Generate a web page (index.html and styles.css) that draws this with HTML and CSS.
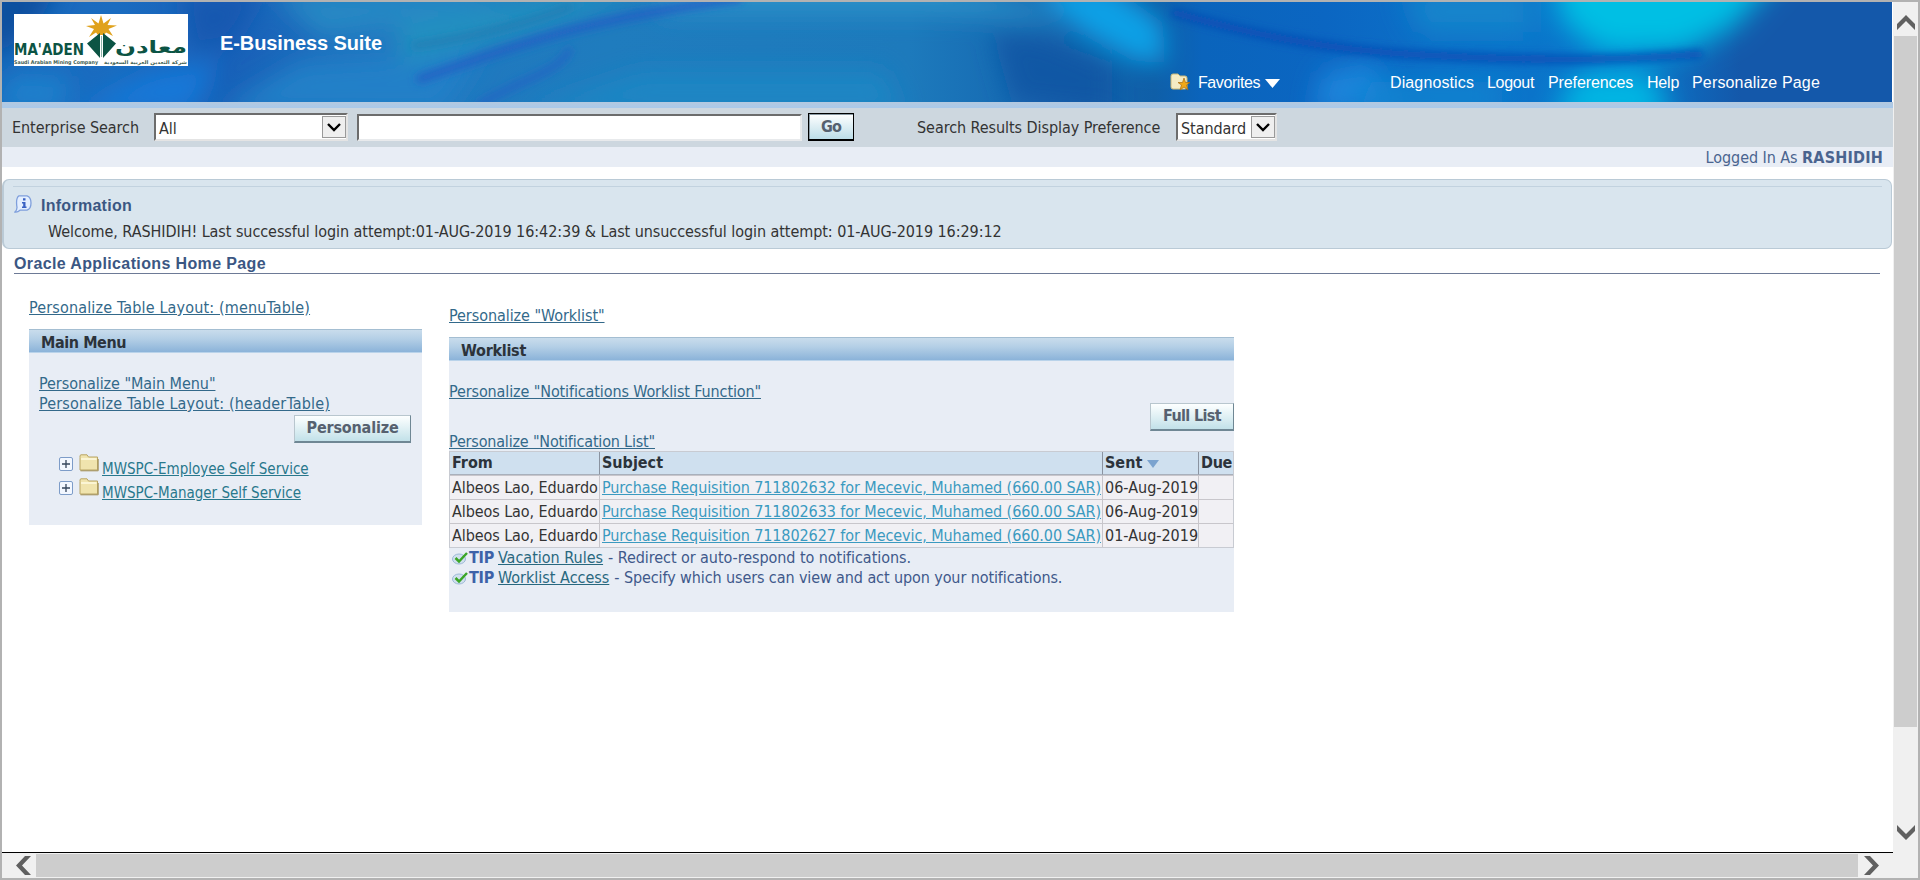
FILE: index.html
```html
<!DOCTYPE html>
<html lang="en">
<head>
<meta charset="utf-8">
<title>Oracle Applications Home Page</title>
<link rel="stylesheet" href="styles.css">
</head>
<body>
<div class="window">
<div class="viewport">
<main class="page">
  <header class="banner">
    <svg class="banner-art" viewBox="0 0 1890 100" preserveAspectRatio="none" aria-hidden="true">
      <defs>
        <linearGradient id="base" x1="0" x2="1" y1="0" y2="0">
          <stop offset="0" stop-color="#1a68bc"/><stop offset=".06" stop-color="#1a6cc0"/>
          <stop offset=".12" stop-color="#1860b8"/><stop offset=".2" stop-color="#2076c0"/>
          <stop offset=".32" stop-color="#1f7cbe"/><stop offset=".48" stop-color="#1d7abc"/>
          <stop offset=".55" stop-color="#1466b0"/><stop offset=".61" stop-color="#0f5fa8"/>
          <stop offset=".635" stop-color="#0a64bc"/>
          <stop offset=".7" stop-color="#0b66c2"/>
          <stop offset=".76" stop-color="#0c70c8"/><stop offset=".86" stop-color="#0878cc"/>
          <stop offset=".92" stop-color="#1458aa"/><stop offset="1" stop-color="#1458aa"/>
        </linearGradient>
        <filter id="b4" x="-30%" y="-60%" width="160%" height="220%"><feGaussianBlur stdDeviation="4"/></filter>
        <filter id="b12" x="-30%" y="-60%" width="160%" height="220%"><feGaussianBlur stdDeviation="12"/></filter>
        <filter id="b20" x="-40%" y="-80%" width="180%" height="260%"><feGaussianBlur stdDeviation="14"/></filter>
      </defs>
      <rect width="1890" height="100" fill="url(#base)"/>
      <g filter="url(#b12)">
        <path d="M-20-20H60L30 30L-20 60Z" fill="#0c4f9f"/>
        <path d="M-10 110L10 70L70 75L60 110Z" fill="#1c80cc"/>
        <path d="M70 110L150 70L215 60L190 110Z" fill="#1478d8"/>
        <path d="M180-10H260L230 40L190 50Z" fill="#1658b0"/>
        <path d="M215 110L300 60L480 50L440 110Z" fill="#2380c8"/>
        <path d="M270-10H520L440 18L320 35Z" fill="#2888c4"/>
        <path d="M395 25L560-10H650L500 38L400 62Z" fill="#2490c0"/>
        <path d="M520 110L640 70H880L900 110Z" fill="#1a86c4"/>
        <path d="M650-20H930L1100 20L930 12H660Z" fill="#2a90c8"/>
        <path d="M990 30L1040 34L1110 64V110L1010 100Z" fill="#1154a2" opacity=".8"/>
        <path d="M1030-20L1110-15L1160 20L1164 62L1130 58L1080 30Z" fill="#10a0e6"/>
        <path d="M1320 70L1370 60L1400 110H1310Z" fill="#1c84da"/>
      </g>
      <g filter="url(#b20)">
        <path d="M1550-40H1790L1730 26L1680 50H1600L1560 20Z" fill="#00bfe4"/>
        <path d="M1550 120L1575 72H1650L1670 120Z" fill="#00b8e4"/>
        <path d="M1350 110L1370 80H1500V110Z" fill="#0c84d0"/>
        <path d="M1400-10H1530V30H1420Z" fill="#1286cc"/>
      </g>
      <g filter="url(#b4)" fill="none">
        <path d="M415 78C520 42 570 20 740-4" stroke="#2460c4" stroke-width="8"/>
        <path d="M475 104C520 76 560 70 568 46" stroke="#2064c4" stroke-width="6"/>
        <path d="M410 44C480 34 540 16 570 4" stroke="#2078b0" stroke-width="5"/>
        <path d="M1170 10C1240 30 1320 48 1420 53S1600 60 1700 52" stroke="#084cb4" stroke-width="8"/>
      </g>
    </svg>
    <svg class="logo" viewBox="0 0 174 52" role="img" aria-label="Ma'aden">
      <rect width="174" height="52" fill="#fff"/>
      <path d="M87 1L89.500 9.500L97 4L93.500 11L103 11.500L94.500 15L99 22L92 18.500L90 21H84L82 18.500L75 23L80 15L72 12L81 11L77 4L84.500 9.500Z" fill="#e0a21c"/>
      <path d="M86 19L73 29.500L86 44Z M89 19V44L102 29.500Z" fill="#0c5444"/>
      <path d="M87.500 22V43" stroke="#8fb5a9"/>
      <text x="0" y="41" textLength="70" lengthAdjust="spacingAndGlyphs" class="logo-name">MA'ADEN</text>
      <text x="173" y="39" textLength="72" lengthAdjust="spacingAndGlyphs" class="logo-ar" direction="rtl">معادن</text>
      <text x="0" y="50" textLength="84" lengthAdjust="spacingAndGlyphs" class="logo-sub">Saudi Arabian Mining Company</text>
      <text x="173" y="49.500" textLength="83" lengthAdjust="spacingAndGlyphs" class="logo-sub" direction="rtl">شركة التعدين العربية السعودية</text>
    </svg>
    <h1 class="product">E-Business Suite</h1>
    <nav class="global">
      <a class="favorites">
        <svg width="20" height="18" viewBox="0 0 20 18"><path d="M1 3Q1 1 3 1H8L10 3H15Q17 3 17 5V14Q17 16 15 16H3Q1 16 1 14Z" fill="#f4ebc4" stroke="#c9b878"/><path d="M14 5L15.500 9.500H20L16.500 12L18 17L14 14L10 17L11.500 12L8 9.500H12.500Z" fill="#f0a818" stroke="#a86c10" stroke-width=".7"/></svg>
        <span>Favorites</span>
        <svg width="15" height="9" viewBox="0 0 15 9"><path d="M0 0H15L7.500 9Z" fill="#fff"/></svg>
      </a>
      <a class="g1">Diagnostics</a><a class="g2">Logout</a><a class="g3">Preferences</a><a class="g4">Help</a><a class="g5">Personalize Page</a>
    </nav>
  </header>
  <div class="band"></div>
  <form class="search">
    <label class="es">Enterprise Search</label>
    <span class="select wide">All<i><svg width="14" height="9" viewBox="0 0 14 9"><path d="M1 1L7 7L13 1" fill="none" stroke="#000" stroke-width="2.400"/></svg></i></span>
    <input class="field" type="text" aria-label="Search">
    <button class="go" type="button">Go</button>
    <label class="pref">Search Results Display Preference</label>
    <span class="select">Standard<i><svg width="14" height="9" viewBox="0 0 14 9"><path d="M1 1L7 7L13 1" fill="none" stroke="#000" stroke-width="2.400"/></svg></i></span>
  </form>
  <div class="login">Logged In As <b>RASHIDIH</b></div>

  <section class="info">
    <div class="info-title">
      <svg width="18" height="18" viewBox="0 0 18 18"><path d="M5 .8H13Q17 2 17 8T13 15.200H6Q3.500 17.500 1 17Q3 15 3 12.500Q1.500 3 5 .8Z" fill="#e4efff" stroke="#7f9fdc" stroke-width="1.300"/><path d="M9 3.200H11.500V5.500H9ZM8 7H11.500V11.500H12.500V13H8V11.500H9.200V8.500H8Z" fill="#3a62c4"/></svg>
      <h2>Information</h2>
    </div>
    <p>Welcome, RASHIDIH! Last successful login attempt:01-AUG-2019 16:42:39 &amp; Last unsuccessful login attempt: 01-AUG-2019 16:29:12</p>
  </section>
  <h2 class="home">Oracle Applications Home Page</h2>

  <div class="columns">
    <section class="menu">
      <a class="link loose">Personalize Table Layout: (menuTable)</a>
      <h3 class="menu-title">Main Menu</h3>
      <div class="menu-body">
        <a class="link">Personalize "Main Menu"</a>
        <a class="link loose">Personalize Table Layout: (headerTable)</a>
        <button class="btn" type="button">Personalize</button>
        <ul class="tree">
          <li><svg width="14" height="14" viewBox="0 0 14 14"><rect x=".5" y=".5" width="13" height="13" rx="1.500" fill="#f2f7ff" stroke="#7d9cc8"/><path d="M3 7H11M7 3V11" stroke="#34465c" stroke-width="1.300"/></svg><svg class="folder" width="20" height="18" viewBox="0 0 20 18"><path d="M1 3.500V1.500L2 .8H8L9.500 3H18.500V16H1Z" fill="#f0e4ae" stroke="#b9a564"/><path d="M2 5H17.500" stroke="#fffbe0" stroke-width="1.500"/><path d="M1.500 16.800H19.200V5" fill="none" stroke="#a08d55"/></svg><a>MWSPC-Employee Self Service</a></li>
          <li><svg width="14" height="14" viewBox="0 0 14 14"><rect x=".5" y=".5" width="13" height="13" rx="1.500" fill="#f2f7ff" stroke="#7d9cc8"/><path d="M3 7H11M7 3V11" stroke="#34465c" stroke-width="1.300"/></svg><svg class="folder" width="20" height="18" viewBox="0 0 20 18"><path d="M1 3.500V1.500L2 .8H8L9.500 3H18.500V16H1Z" fill="#f0e4ae" stroke="#b9a564"/><path d="M2 5H17.500" stroke="#fffbe0" stroke-width="1.500"/><path d="M1.500 16.800H19.200V5" fill="none" stroke="#a08d55"/></svg><a>MWSPC-Manager Self Service</a></li>
        </ul>
      </div>
    </section>

    <section class="worklist">
      <a class="link">Personalize "Worklist"</a>
      <h3>Worklist</h3>
      <div class="work-body">
        <a class="link fn">Personalize "Notifications Worklist Function"</a>
        <button class="btn" type="button">Full List</button>
        <a class="link tight">Personalize "Notification List"</a>
        <table>
          <colgroup><col class="c1"><col class="c2"><col class="c3"><col class="c4"></colgroup>
          <tr><th>From</th><th>Subject</th><th>Sent<svg class="sort" width="12" height="8" viewBox="0 0 12 8"><path d="M0 0H12L6 8Z" fill="#7ba3cf"/></svg></th><th class="due">Due</th></tr>
          <tr><td>Albeos Lao, Eduardo</td><td><a>Purchase Requisition 711802632 for Mecevic, Muhamed (660.00 SAR)</a></td><td>06-Aug-2019</td><td></td></tr>
          <tr><td>Albeos Lao, Eduardo</td><td><a>Purchase Requisition 711802633 for Mecevic, Muhamed (660.00 SAR)</a></td><td>06-Aug-2019</td><td></td></tr>
          <tr><td>Albeos Lao, Eduardo</td><td><a>Purchase Requisition 711802627 for Mecevic, Muhamed (660.00 SAR)</a></td><td>01-Aug-2019</td><td></td></tr>
        </table>
        <p class="tip"><svg width="17" height="13" viewBox="0 0 17 13"><ellipse cx="7" cy="7" rx="6.500" ry="5" fill="#cfe0ee" stroke="#9db9d6"/><path d="M3.500 6L7 9.500L15 1" fill="none" stroke="#3ba526" stroke-width="2.500"/></svg><b>TIP</b><a>Vacation Rules</a><span>- Redirect or auto-respond to notifications.</span></p>
        <p class="tip"><svg width="17" height="13" viewBox="0 0 17 13"><ellipse cx="7" cy="7" rx="6.500" ry="5" fill="#cfe0ee" stroke="#9db9d6"/><path d="M3.500 6L7 9.500L15 1" fill="none" stroke="#3ba526" stroke-width="2.500"/></svg><b>TIP</b><a>Worklist Access</a><span class="spec">- Specify which users can view and act upon your notifications.</span></p>
      </div>
    </section>
  </div>
</main>
<div class="vscroll">
  <svg width="20" height="16" viewBox="0 0 20 16"><path d="M1 13V9L10 0L19 9V15L10 6L1 15Z" fill="#606060"/></svg>
  <div class="vthumb"></div>
  <svg class="down" width="20" height="16" viewBox="0 0 20 16"><path d="M1 1L10 10L19 1V7L10 16L1 7Z" fill="#606060"/></svg>
</div>
</div>
<div class="hscroll">
  <svg width="16" height="20" viewBox="0 0 16 20"><path d="M9 0H15L6 9.500L15 19H9L0 9.500Z" fill="#606060"/></svg>
  <div class="hthumb"></div>
  <svg width="16" height="20" viewBox="0 0 16 20"><path d="M7 0H1L10 9.500L1 19H7L16 9.500Z" fill="#606060"/></svg>
</div>
</div>
</body>
</html>
```

FILE: styles.css
```css
* { box-sizing: border-box; }
body { margin: 0; font: 16px/20px "DejaVu Sans Condensed", "DejaVu Sans", sans-serif; font-stretch: condensed; letter-spacing: -0.06px; color: #333; background: #fff; }
h1, h2, h3, p, ul { margin: 0; padding: 0; }
svg { display: block; flex: none; }
.window { width: 1920px; height: 880px; border: 2px solid #b2b2b2; display: flex; flex-direction: column; overflow: hidden; }
.viewport { display: flex; height: 851px; }
.page { width: 1891px; border-bottom: 1px solid #000; }

.banner { height: 100px; display: flex; align-items: flex-start; position: relative; color: #fff; font-family: "Liberation Sans", sans-serif; }
.banner-art { position: absolute; inset: 0; width: 1890px; height: 100px; }
.logo { width: 174px; height: 52px; margin: 12px 0 0 12px; position: relative; letter-spacing: 0; }
.logo-name { font: bold 15.5px "DejaVu Sans Condensed", sans-serif; fill: #0c5444; }
.logo-ar { font: bold 17px "DejaVu Sans", sans-serif; fill: #0c5444; }
.logo-sub { font: bold 5px "DejaVu Sans", sans-serif; fill: #3c5c50; }
.product { font: bold 20px/24px "Liberation Sans", sans-serif; letter-spacing: -0.09px; margin: 29px 0 0 32px; width: 949px; position: relative; }
.global { display: flex; position: relative; margin-top: 71px; line-height: 20px; }
.favorites { display: flex; align-items: center; width: 220px; margin-left: 1px; letter-spacing: -0.42px; }
.favorites > svg:first-child { margin-top: -2px; }
.favorites span { margin: 0 5px 0 8px; }
.g1 { width: 97px; letter-spacing: .12px; } .g2 { width: 61px; letter-spacing: -0.32px; } .g3 { width: 99px; letter-spacing: -0.11px; } .g4 { width: 45px; letter-spacing: -0.2px; } .g5 { letter-spacing: .16px; }

.band { height: 6px; background: linear-gradient(#b4c9df, #a9c9ea); }
.search { height: 39px; background: #cdd7df; display: flex; align-items: flex-start; padding: 5px 0 0 10px; }
.search label { line-height: 30px; }
.es { width: 142px; }
.select { height: 28px; width: 101px; background: #fff; border: 2px solid; border-color: #6c6c6c #e4e4e4 #e4e4e4 #6c6c6c; display: flex; justify-content: space-between; line-height: 25px; padding: 1px 0 0 3px; }
.select.wide { width: 194px; }
.select i { width: 24px; height: 22px; border: 1px solid #9a9a9a; background: #efefef; display: flex; align-items: center; justify-content: center; }
.field { width: 445px; height: 27px; margin: 1px 6px 0 9px; border: 2px solid; border-color: #6c6c6c #e8eaec #e8eaec #6c6c6c; background: #fff; padding: 0; }
.go { width: 46px; height: 28px; margin: 0 63px 0 0; padding: 0; border: 1px solid #000; border-bottom-width: 2px; background: linear-gradient(#fff, #bcdde8); box-shadow: inset 1px 1px #8a9aa4; font: bold 16px/20px "DejaVu Sans Condensed", sans-serif; letter-spacing: -0.85px; color: #56616f; }
.pref { width: 259px; }
.login { height: 20px; background: #e8edf5; color: #4a648f; line-height: 22px; text-align: right; padding-right: 10px; }
.login b { letter-spacing: .2px; }

.info { margin: 12px 1px 0 0; height: 70px; border: 1px solid #bacad6; border-left: 2px solid #bacad6; border-radius: 7px; background: #d9e5ee; padding: 6px 9px 0 9px; }
.info-title { border-top: 1px solid #c2d2df; display: flex; padding: 8px 0 0 1px; gap: 9px; height: 35px; }
.info h2, .home { font: bold 16px/20px "Liberation Sans", sans-serif; letter-spacing: .27px; color: #3b5783; }
.info h2 { line-height: 22px; }
.info p { padding-left: 35px; line-height: 21px; }
.home { margin: 5px 13px 0 12px; height: 20px; border-bottom: 1px solid #6d7a96; letter-spacing: .37px; }

.columns { display: flex; padding-left: 27px; }
.link { display: block; color: #33698a; text-decoration: underline; height: 20px; line-height: 22px; }
.loose { letter-spacing: .155px; }
.fn { letter-spacing: -0.116px; }
.tight { letter-spacing: -0.183px; }
.menu { width: 393px; margin-right: 27px; padding-top: 23px; }
.worklist { width: 785px; padding-top: 31px; }
h3 { height: 24px; margin-top: 12px; padding-left: 12px; font: bold 16px/26px "DejaVu Sans Condensed", sans-serif; letter-spacing: -0.27px; color: #2c333b; background: linear-gradient(#c9dcec, #b4cfe6 40%, #8bb3d9); border-top: 1px solid #a4bed2; border-bottom: 1px solid #b9d3ea; }
.menu-title { letter-spacing: -0.42px; }
.menu-body { height: 172px; background: #e8edf5; padding: 20px 11px 0 10px; display: flex; flex-direction: column; }
.btn { align-self: flex-end; height: 28px; width: 117px; padding: 0 0 1px; border: 1px solid; border-color: #b8c6ce #6f8794 #6f8794 #b8c6ce; border-bottom-width: 2px; background: linear-gradient(#fdffff, #c2e1e9); font: bold 16px/20px "DejaVu Sans Condensed", sans-serif; letter-spacing: -0.17px; color: #56616f; }
.menu-body .btn { margin-top: 2px; }
.tree { list-style: none; padding: 10px 0 0 20px; }
.tree li { display: flex; height: 24px; font-size: 15px; letter-spacing: 0; }
.tree li > svg { margin-top: 4px; }
.tree li > .folder { margin: 1px 3px 0 6px; }
.tree a { color: #28788c; text-decoration: underline; padding-top: 6px; }
.work-body { height: 251px; background: #e8edf5; padding-top: 20px; display: flex; flex-direction: column; }
.work-body .btn { width: 84px; margin-top: 2px; letter-spacing: -0.63px; }
table { width: 785px; table-layout: fixed; border-collapse: separate; border-spacing: 0; border: 1px solid #c8cbd2; }
.c1 { width: 149px; } .c2 { width: 503px; } .c3 { width: 96px; }
th, td { height: 24px; padding: 0 0 0 2px; text-align: left; line-height: 20px; white-space: nowrap; border-top: 1px solid #c8c6cb; background: #f1f0f4; border-left: 1px solid #c8c6cb; letter-spacing: -0.084px; }
td:nth-child(3) { letter-spacing: 0; }
th { height: 23px; background: #cfe0ef; color: #2c333b; border-left-color: #8a93a0; border-top: 0; border-bottom: 1px solid #a8b0bc; letter-spacing: 0; }
.due { letter-spacing: -0.32px; }
th:first-child, td:first-child { border-left: 0; }
td a { color: #3b9ac0; text-decoration: underline; }
.sort { display: inline-block; margin-left: 5px; }
.tip { display: flex; color: #40598b; height: 20px; align-items: center; padding-left: 3px; }
.tip b { color: #3d62a8; margin-right: 4px; letter-spacing: -0.24px; }
.tip a { color: #28687f; text-decoration: underline; margin-right: 5px; letter-spacing: 0; }
.spec { letter-spacing: -0.097px; }

.vscroll { width: 25px; background: #f0f0f0; padding-top: 13px; display: flex; flex-direction: column; align-items: center; }
.vthumb { width: 23px; height: 691px; background: #cdcdcd; margin: 5px 0 97px; }
.hscroll { flex: 1; background: #f0f0f0; display: flex; align-items: center; padding-left: 14px; }
.hthumb { width: 1822px; height: 23px; background: #cdcdcd; margin: 0 5px 0 4px; }
```
